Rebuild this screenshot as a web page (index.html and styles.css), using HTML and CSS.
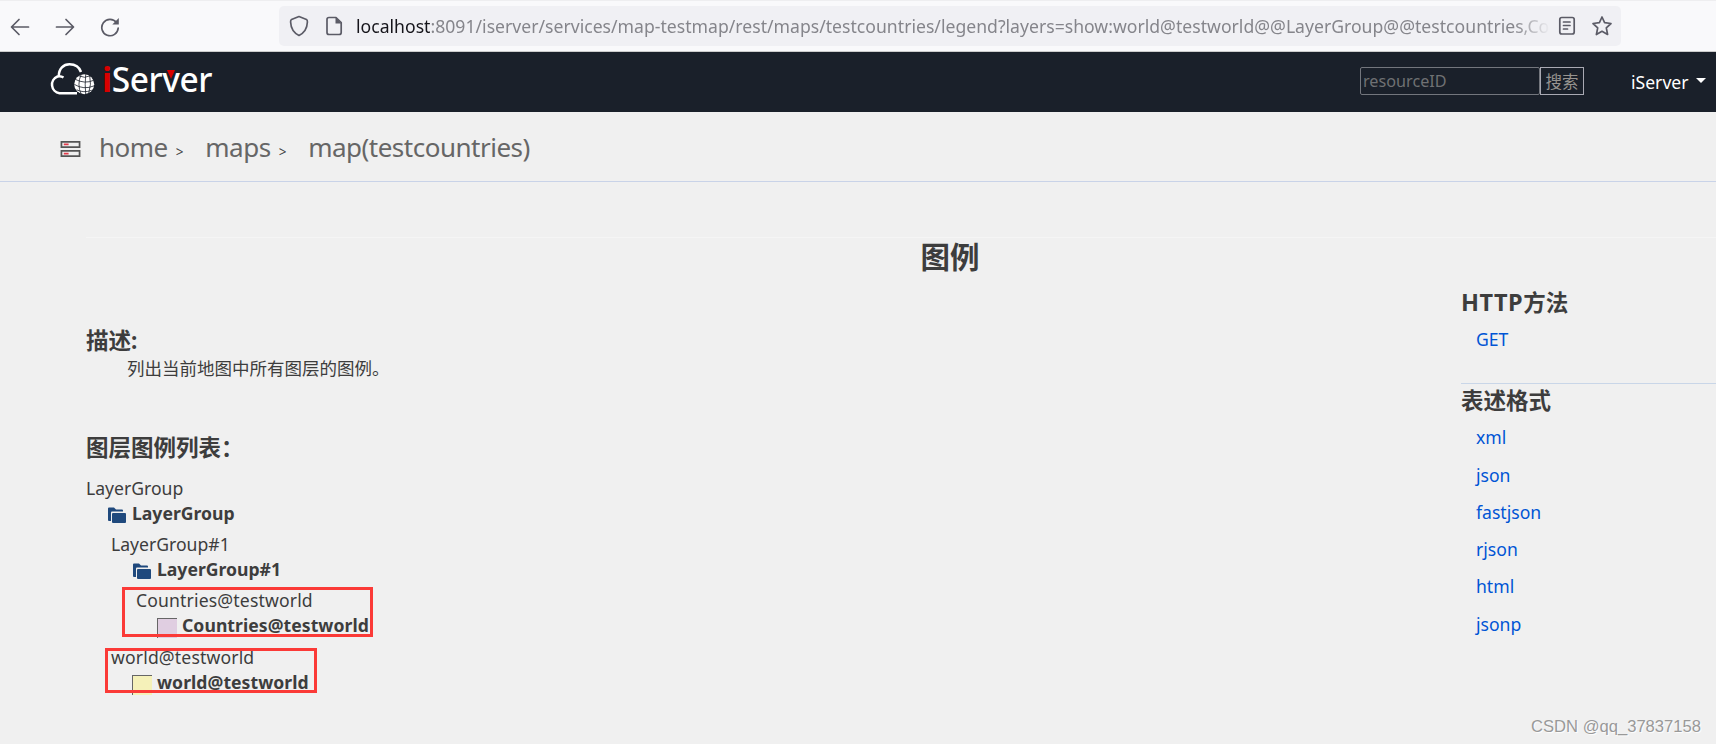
FILE: index.html
```html
<!DOCTYPE html>
<html lang="zh-CN">
<head>
    <meta charset="UTF-8">
    <title>iServer</title>
    <link rel="stylesheet" href="styles.css">
</head>
<body>
    <div class="toolbar">
        <div class="nav-buttons">
            <svg width="20" height="20" viewBox="0 0 20 20"><path d="M18.500 10H2M9 2.500L1.500 10L9 17.500"/></svg>
            <svg width="20" height="20" viewBox="0 0 20 20"><path d="M1.500 10H18M11 2.500L18.500 10L11 17.500"/></svg>
            <svg width="20" height="20" viewBox="0 0 20 20"><path d="M16.500 5.500A8.200 8.200 0 1 0 18.200 11"/><path class="solid" d="M18.800 1V7.500H12.300z"/></svg>
        </div>
        <div class="url-bar">
            <svg width="20" height="22" viewBox="0 0 20 22"><path d="M10 1.500L17.500 4.500Q18.500 5 18.400 7Q18 16.500 10 20.500Q2 16.500 1.600 7Q1.500 5 2.500 4.500z"/></svg>
            <svg width="18" height="20" viewBox="0 0 18 20"><path d="M4 1.500H11L16.200 6.500V16.500Q16.200 18.500 14.200 18.500H4Q2 18.500 2 16.500V3.500Q2 1.500 4 1.500z"/><path class="solid" d="M10.500 1V7.500H16.500z"/></svg>
            <div class="url"><span class="host">localhost</span>:8091/iserver/services/map-testmap/rest/maps/testcountries/legend?layers=show:world@testworld@@LayerGroup@@testcountries,Co</div>
            <svg width="18" height="20" viewBox="0 0 18 20"><rect x="1.800" y="1.500" width="14.400" height="16.500" rx="2"/><path d="M5.500 6H12M5.500 9.500H12M5.500 13H9.500"/></svg>
            <svg width="22" height="22" viewBox="0 0 22 22"><path d="M11 2L13.600 7.700L20 8.500L15.300 12.800L16.600 19.500L11 16.300L5.400 19.500L6.700 12.800L2 8.500L8.400 7.700z"/></svg>
        </div>
    </div>

    <div class="header">
        <div class="logo">
            <svg width="46" height="34" viewBox="0 0 46 34">
                <path class="cloud" d="M28 31.200H10.500A8.700 8.700 0 0 1 8.500 14.500Q11.500 13.500 14.500 15.500M9.800 14C9.800 6.500 14.500 2.200 20.500 2.200C26.500 2.200 30.500 5.500 32 10"/>
                <circle class="globe" cx="35.200" cy="22.300" r="10"/>
                <path class="globe-lines" d="M26.200 17.300Q35.700 22.300 44.700 18.300M25.200 22.300Q34.700 28.300 45.200 23.800M27.700 27.800Q34.700 31.300 42.700 28.300M29.700 13.800Q35.700 16.800 41.200 13.800M32.200 12.300Q27.700 22.300 32.200 32.300M36.700 12.300Q35.700 22.300 36.700 32.300M40.700 13.300Q42.700 22.300 39.700 31.300"/>
            </svg>
            <div class="logo-text"><span class="red">i</span>Ser<span class="v">v</span>er</div>
        </div>
        <div class="search">
            <input type="text" placeholder="resourceID">
            <button>搜索</button>
        </div>
        <div class="user">iServer<span class="caret"></span></div>
    </div>

    <div class="breadcrumb">
        <svg width="22" height="18" viewBox="0 0 22 18"><path d="M1.500 1.500H20.500V7H1.500zM1.500 11H20.500V16.500H1.500z"/><path class="led" d="M4 4.200H9M4 13.800H9"/></svg>
        <a class="crumb">home</a><span class="arrow">&gt;</span>
        <a class="crumb">maps</a><span class="arrow">&gt;</span>
        <a class="crumb">map(testcountries)</a>
    </div>

    <div class="content">
        <h1>图例</h1>
        <div class="columns">
            <div class="main">
                <h2>描述:</h2>
                <p class="desc">列出当前地图中所有图层的图例。</p>
                <h2 class="list-title">图层图例列表：</h2>
                <div class="tree">
                    <div class="layer">
                        <div class="name">LayerGroup</div>
                        <div class="legend"><svg class="folder" width="18" height="16" viewBox="0 0 18 16"><path d="M0 1.500Q0 .5 1 .5H6L8 2.500H14Q15 2.500 15 3.500V4.500H4Q3 4.500 3 5.500V14H1Q0 14 0 13z"/><rect x="4" y="6" width="14" height="10" rx="1"/></svg><b>LayerGroup</b></div>
                    </div>
                    <div class="layer sub">
                        <div class="name">LayerGroup#1</div>
                        <div class="legend"><svg class="folder" width="18" height="16" viewBox="0 0 18 16"><path d="M0 1.500Q0 .5 1 .5H6L8 2.500H14Q15 2.500 15 3.500V4.500H4Q3 4.500 3 5.500V14H1Q0 14 0 13z"/><rect x="4" y="6" width="14" height="10" rx="1"/></svg><b>LayerGroup#1</b></div>
                    </div>
                    <div class="layer sub2 marked">
                        <div class="name wide">Countries@testworld</div>
                        <div class="legend"><span class="swatch purple"></span><b>Countries@testworld</b></div>
                    </div>
                    <div class="layer sub marked world">
                        <div class="name wide">world@testworld</div>
                        <div class="legend"><span class="swatch yellow"></span><b>world@testworld</b></div>
                    </div>
                </div>
            </div>
            <div class="side">
                <h2><span class="http">HTTP</span>方法</h2>
                <ul>
                    <li><a>GET</a></li>
                </ul>
                <h2 class="formats">表述格式</h2>
                <ul>
                    <li><a>xml</a></li>
                    <li><a>json</a></li>
                    <li><a>fastjson</a></li>
                    <li><a>rjson</a></li>
                    <li><a>html</a></li>
                    <li><a>jsonp</a></li>
                </ul>
            </div>
        </div>
    </div>
    <div class="watermark">CSDN @qq_37837158</div>
</body>
</html>
```
FILE: styles.css
```css
*, *::after {
    box-sizing: border-box;
}

body {
    margin: 0;
    height: 744px;
    overflow: hidden;
    position: relative;
    background-color: #f0f0f0;
    color: #3d3d3d;
    font-family: "Noto Sans", "Noto Sans CJK SC", sans-serif;
    font-size: 17.6px;
}

svg {
    flex: none;
    fill: none;
}

/* browser toolbar */
.toolbar {
    display: flex;
    height: 52px;
    padding-top: 5px;
    background-color: #f9f9fb;
    border-top: 1px solid #eeeef0;
    border-bottom: 1px solid #cccccc;
}

.toolbar svg {
    stroke: #5b5b66;
    stroke-width: 1.7;
    stroke-linejoin: round;
    stroke-linecap: round;
}

.toolbar .solid {
    fill: #5b5b66;
    stroke: none;
}

.nav-buttons {
    display: flex;
    align-items: center;
    gap: 25px;
    width: 279px;
    height: 42px;
    padding-left: 10px;
}

.url-bar {
    display: flex;
    align-items: center;
    width: 1342px;
    height: 40px;
    padding: 0 8px 0 10px;
    border-radius: 5px;
    background-color: #f0f0f4;
}

.url-bar svg:nth-child(2) {
    margin: 0 13px 0 16px;
}

.url-bar svg:nth-child(4) {
    margin: 0 15px 0 8px;
}

.url {
    flex: 1;
    white-space: nowrap;
    color: #85858b;
    line-height: 30px;
    letter-spacing: 0.015px;
    -webkit-mask-image: linear-gradient(to right, #000 97%, transparent);
}

.host {
    color: #15141a;
}

/* page header */
.header {
    display: flex;
    height: 60px;
    background-color: #1a202a;
}

.logo {
    display: flex;
    width: 1360px;
    padding: 10px 0 0 49px;
}

.logo-text {
    margin-left: 7px;
    color: #fff;
    font-size: 33.5px;
    line-height: 34px;
    font-weight: 500;
    letter-spacing: -0.4px;
}

.logo .cloud {
    stroke: #fff;
    stroke-width: 2.5;
}

.logo .globe {
    fill: #fff;
}

.logo .globe-lines {
    stroke: #1a202a;
    stroke-width: 0.8;
}

.red {
    color: #d80000;
    font-weight: 700;
}

.v {
    position: relative;
}

.v::after {
    content: "";
    position: absolute;
    left: 5px;
    top: 14px;
    border: 4px solid transparent;
    border-top: 9px solid #d80000;
    border-bottom: 0;
}

.search {
    display: flex;
    width: 271px;
    padding-top: 15px;
}

.search input {
    width: 180px;
    height: 28px;
    padding: 0 2px;
    border: 1px solid #73767d;
    border-radius: 2px;
    background: none;
    font: 16.2px "Noto Sans", sans-serif;
}

.search input::placeholder {
    color: #6f7173;
}

.search button {
    width: 44px;
    height: 28px;
    padding: 0;
    border: 1px solid #a9a9b3;
    background: none;
    color: #96938f;
    font: 16.5px "Noto Sans CJK SC", sans-serif;
}

.user {
    display: flex;
    color: #fff;
    line-height: 60px;
}

.caret {
    margin: 26px 0 0 7px;
    width: 10px;
    height: 5px;
    border: 5px solid transparent;
    border-top-color: #fff;
    border-bottom: 0;
}

/* breadcrumb */
.breadcrumb {
    display: flex;
    height: 70px;
    padding-left: 60px;
    border-bottom: 1px solid #c9d3e8;
    color: #666;
    font-size: 26px;
    line-height: 71px;
}

.breadcrumb svg {
    width: 21px;
    margin: 28px 18px 0 0;
    stroke: #555;
    stroke-width: 1.8;
}

.breadcrumb .led {
    stroke: #e23c4c;
}

.crumb {
    letter-spacing: -0.5px;
}

.arrow {
    width: 37.5px;
    padding-left: 8px;
    color: #444;
    font-size: 13.5px;
    line-height: 80px;
}

/* content */
.content {
    margin: 55px 0 0 86px;
    border-top: 1px solid #f5f5f5;
}

h1 {
    margin: 0;
    padding: 0 0 2px 98px;
    text-align: center;
    font-size: 29.5px;
    line-height: 37px;
}

h2 {
    margin: 0;
    font-size: 22.5px;
    line-height: 28px;
}

.columns {
    display: flex;
}

.main {
    width: 1375px;
    padding-top: 50px;
}

.desc {
    margin: 0;
    padding-left: 41px;
    font-size: 17.5px;
    line-height: 26px;
}

.list-title {
    margin-top: 52px;
    line-height: 30px;
}

.tree {
    margin-top: 13px;
}

.layer {
    width: max-content;
    margin-bottom: 6px;
    line-height: 25px;
}

.legend {
    display: flex;
    height: 25px;
    padding-left: 22px;
}

.wide {
    letter-spacing: 0.15px;
}

.legend b {
    letter-spacing: 0.05px;
}

.sub {
    margin-left: 25px;
}

.sub2 {
    margin-left: 50px;
}

.folder {
    margin: 6px 6px 0 0;
    fill: #1f497d;
}

.folder + b {
    letter-spacing: 0;
}

.swatch {
    width: 20px;
    height: 20px;
    margin: 5px 5px 0 -1px;
    border-top: 1px solid #666;
    border-left: 1px solid #666;
}

.purple {
    background-color: #e0cee1;
}

.yellow {
    background-color: #f5f1b9;
}

/* red frames over the legend rows */
.marked {
    position: relative;
}

.marked::after {
    content: "";
    position: absolute;
    left: -14px;
    top: -1px;
    width: 251px;
    height: 50px;
    border: 3px solid #fb3a37;
}

.world {
    margin-top: 7px;
}

.world::after {
    left: -6px;
    top: 3px;
    width: 212px;
    height: 45px;
}

.side {
    flex: 1;
    padding-top: 11px;
}

.side ul {
    margin: 4px 0 0;
    padding: 0 0 0 15px;
    list-style: none;
}

.side li {
    line-height: 37.3px;
    color: #0055d5;
}

.http {
    font-size: 23.5px;
    letter-spacing: 0.5px;
}

.formats {
    margin-top: 25px;
    padding-top: 3px;
    border-top: 1px solid #c9d6e8;
}

.watermark {
    position: absolute;
    right: 15px;
    bottom: 7px;
    color: #999;
    font: 16.6px/20px "Liberation Sans", sans-serif;
    text-shadow: 1px 1px 1px #fff;
}
```
